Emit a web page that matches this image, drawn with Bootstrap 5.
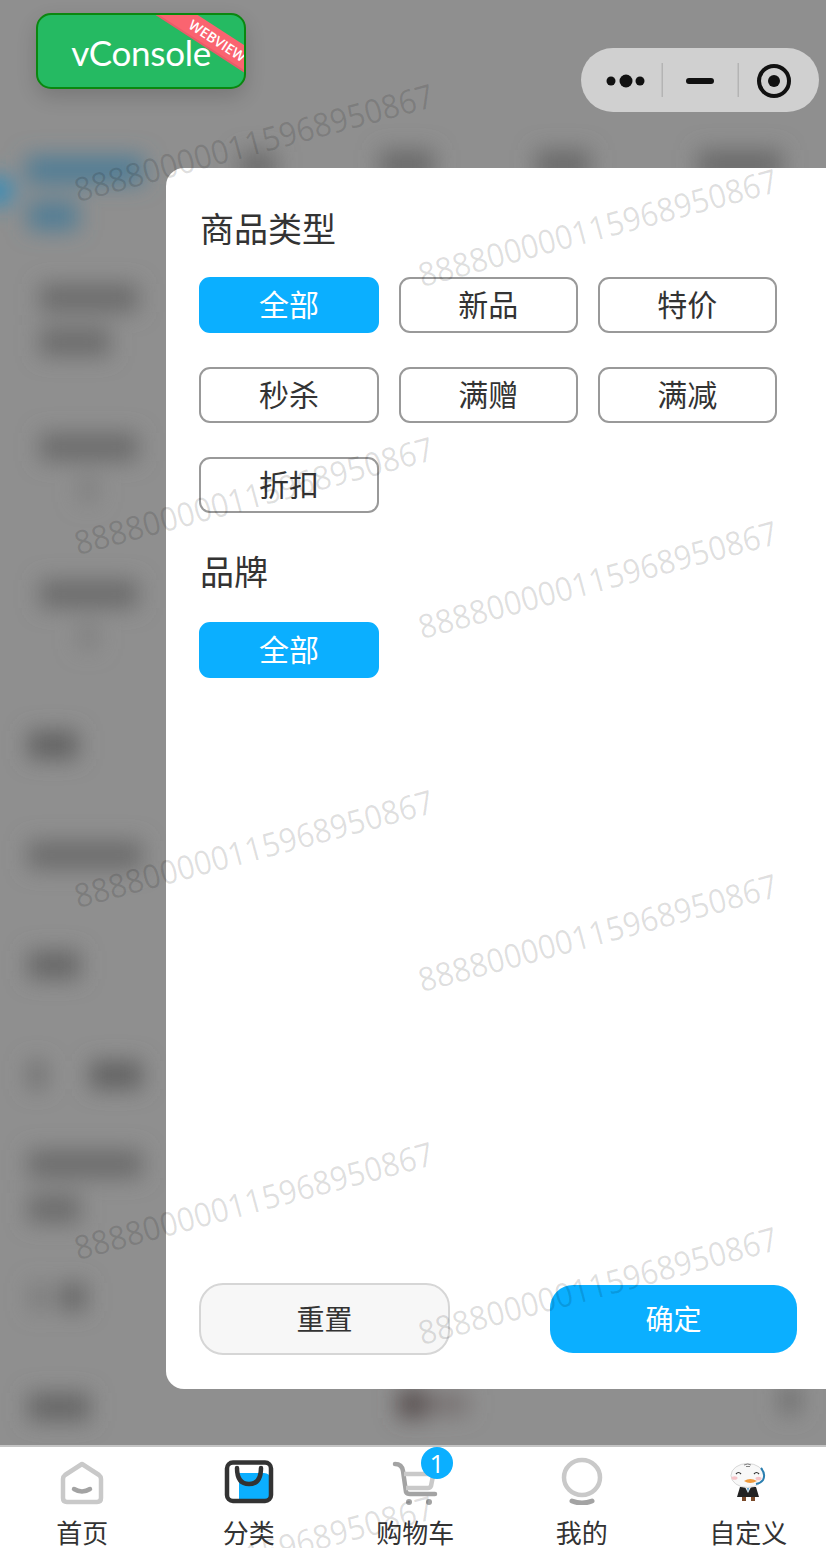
<!DOCTYPE html>
<html lang="zh-CN">
<head>
<meta charset="utf-8">
<title>分类筛选</title>
<link href="https://cdn.jsdelivr.net/npm/bootstrap@5.3.0/dist/css/bootstrap.min.css" rel="stylesheet">
<style>
html,body{margin:0;height:1548px;overflow:hidden;}
body{font-family:"Open Sans","Noto Sans CJK SC",sans-serif;color:#333;background:#fff;}
.screen{position:relative;width:826px;height:1548px;overflow:hidden;}
.backdrop{height:1445px;background:#8f8f8f;display:block;}
.backdrop svg{display:block;}
.drawer{position:absolute;left:166px;top:168px;right:0;height:1221px;background:#fff;border-radius:18px 0 0 18px;padding:34px 0 34px 33px;}
.drawer-title{font-size:34px;line-height:54px;margin:0 0 0 1px;height:54px;font-weight:400;color:#333;}
.chip-grid{display:grid;grid-template-columns:180px 178.5px 179.5px;column-gap:20px;row-gap:34px;}
.types{margin-top:21px;}
.brands{margin-top:23px;}
.chip{height:56px;padding:0;font-size:30px;line-height:52px;border:2px solid #999;border-radius:11px;color:#333;background:#fff;box-shadow:none;}
.chip.on{background:#0bafff;border-color:#0bafff;color:#fff;}
.brand-title{margin-top:32px;}
.drawer-foot{margin-top:auto;padding-right:29px;}
.foot-reset{width:251px;height:72px;padding:0;font-size:28px;background:#f7f7f7;border:2px solid #d6d6d6;border-radius:24px;color:#333;}
.foot-ok{width:247px;height:68px;padding:0;font-size:28px;background:#0bafff;border:0;border-radius:23px;color:#fff;}
.tabbar{height:103px;margin-left:-1px;background:#fff;border-top:2px solid #c4c4c4;display:grid;grid-template-columns:repeat(5,166.5px);}
.tab-item{position:relative;display:flex;flex-direction:column;align-items:center;}
.tab-ico{height:58px;display:flex;align-items:flex-end;justify-content:center;}
.tab-ico svg{display:block;}
.tab-label{font-size:26px;line-height:30px;height:30px;color:#333;white-space:nowrap;margin-top:13px;}
.duck-ico{margin-bottom:4px;}
.cart-count{position:absolute;left:89px;top:0;width:32px;height:32px;border-radius:50%;background:#0bafff;color:#fff;font-size:26px;line-height:32px;text-align:center;font-family:"Open Sans",sans-serif;padding:0;}
.vc-switch{position:absolute;left:36px;top:13px;width:210px;height:76px;background:#25ba62;border:2px solid #0a870f;border-radius:15px;box-shadow:0 8px 20px rgba(0,0,0,.16);color:#fff;font-family:Lato,sans-serif;font-size:35px;letter-spacing:-.3px;line-height:74px;text-align:center;overflow:hidden;z-index:5;padding:0;}
.vc-ribbon{position:absolute;left:97px;top:10px;width:150px;height:21px;background:#fa6470;color:#fff;font-family:"Open Sans",sans-serif;font-size:14px;font-weight:600;letter-spacing:0;line-height:21px;text-align:center;transform:rotate(33deg);box-shadow:0 2px 0 #e95c69;padding-left:18px;}
.capsule{position:absolute;left:581px;top:48px;width:238px;height:64px;border-radius:32px;background:#d0d0d0;z-index:5;}
.capsule svg{display:block;}
.wm-layer{position:absolute;inset:0;pointer-events:none;z-index:4;}
.wm{position:absolute;font-family:"Open Sans",sans-serif;font-size:33px;line-height:40px;white-space:nowrap;color:rgba(0,0,0,.13);transform-origin:0 100%;transform:rotate(-15deg) scaleX(.935);}
.wx1{left:80px;}.wx2{left:423.500px;}
.wy1{top:170px;}.wy2{top:523px;}.wy3{top:876px;}.wy4{top:1228px;}.wy5{top:1582px;}
.wy6{top:255px;}.wy7{top:607px;}.wy8{top:960px;}.wy9{top:1313px;}
</style>
</head>
<body>
<div class="screen">
  <div class="backdrop">
    <svg width="826" height="1445" viewBox="0 0 826 1445" aria-hidden="true">
      <defs><filter id="soft" x="-30%" y="-150%" width="160%" height="400%"><feGaussianBlur stdDeviation="11"/></filter></defs>
      <g filter="url(#soft)">
        <rect x="26" y="156" width="118" height="28" fill="#4f7d95"/>
        <rect x="28" y="202" width="50" height="28" fill="#4f7d95"/>
        <circle cx="-2" cy="191" r="15" fill="#2f8cbc"/>
        <rect x="240" y="152" width="36" height="28" fill="#6a6a6a"/>
        <rect x="380" y="150" width="54" height="30" fill="#6a6a6a"/>
        <rect x="536" y="150" width="54" height="30" fill="#6a6a6a"/>
        <rect x="698" y="150" width="84" height="30" fill="#6a6a6a"/>
        <rect x="40" y="284" width="98" height="28" fill="#6c6c6c"/>
        <rect x="40" y="328" width="70" height="28" fill="#6c6c6c"/>
        <rect x="40" y="433" width="98" height="28" fill="#6c6c6c"/>
        <rect x="78" y="476" width="20" height="26" fill="#808080"/>
        <rect x="40" y="580" width="98" height="28" fill="#6c6c6c"/>
        <rect x="78" y="623" width="20" height="26" fill="#808080"/>
        <rect x="28" y="731" width="50" height="28" fill="#626262"/>
        <rect x="28" y="841" width="114" height="28" fill="#6c6c6c"/>
        <rect x="28" y="951" width="52" height="28" fill="#666"/>
        <rect x="28" y="1061" width="18" height="28" fill="#707070"/>
        <rect x="90" y="1061" width="52" height="28" fill="#626262"/>
        <rect x="28" y="1150" width="114" height="28" fill="#6c6c6c"/>
        <rect x="28" y="1195" width="52" height="28" fill="#6c6c6c"/>
        <rect x="60" y="1283" width="26" height="28" fill="#666"/>
        <rect x="30" y="1283" width="18" height="28" fill="#7a7a7a"/>
        <rect x="28" y="1393" width="62" height="28" fill="#666"/>
        <rect x="398" y="1390" width="28" height="28" fill="#564e4e"/>
        <rect x="426" y="1394" width="42" height="20" fill="#767070"/>
        <rect x="780" y="1386" width="20" height="28" fill="#6e6e6e"/>
      </g>
    </svg>
  </div>

  <section class="drawer d-flex flex-column">
    <h2 class="drawer-title">商品类型</h2>
    <div class="chip-grid types">
      <button type="button" class="btn chip on">全部</button>
      <button type="button" class="btn chip">新品</button>
      <button type="button" class="btn chip">特价</button>
      <button type="button" class="btn chip">秒杀</button>
      <button type="button" class="btn chip">满赠</button>
      <button type="button" class="btn chip">满减</button>
      <button type="button" class="btn chip">折扣</button>
    </div>
    <h2 class="drawer-title brand-title">品牌</h2>
    <div class="chip-grid brands">
      <button type="button" class="btn chip on">全部</button>
    </div>
    <div class="drawer-foot d-flex justify-content-between align-items-center">
      <button type="button" class="btn foot-reset">重置</button>
      <button type="button" class="btn foot-ok">确定</button>
    </div>
  </section>

  <nav class="tabbar">
    <div class="tab-item">
      <div class="tab-ico">
        <svg width="44" height="44" viewBox="0 0 44 44" aria-hidden="true">
          <path d="M22 3 L39 14 Q41 15.500 41 18 V37 Q41 41 37 41 H7 Q3 41 3 37 V18 Q3 15.500 5 14 Z" fill="none" stroke="#c9c9c9" stroke-width="4.500" stroke-linejoin="round"/>
          <path d="M14 28 Q22 33 30 28" fill="none" stroke="#a3a3a3" stroke-width="4.500" stroke-linecap="round"/>
        </svg>
      </div>
      <span class="tab-label">首页</span>
    </div>
    <div class="tab-item">
      <div class="tab-ico">
        <svg width="50" height="45" viewBox="0 0 50 45" aria-hidden="true">
          <path d="M15 13 H40 Q46 13 46 19 V40 H15 Z" fill="#0bafff"/>
          <rect x="3" y="2.500" width="44" height="38.500" rx="6" fill="none" stroke="#333" stroke-width="4.500"/>
          <path d="M13 8 Q13 24 25 24 Q37 24 37 8" fill="none" stroke="#333" stroke-width="4.500" stroke-linecap="round"/>
        </svg>
      </div>
      <span class="tab-label">分类</span>
    </div>
    <div class="tab-item">
      <div class="tab-ico">
        <svg width="46" height="44" viewBox="0 0 46 44" aria-hidden="true">
          <path d="M3 3 Q10 3 11 10 L14 31 Q15 33 18 33 H43" fill="none" stroke="#a3a3a3" stroke-width="4.500" stroke-linecap="round" stroke-linejoin="round"/>
          <path d="M12 13 H39 Q41 13 41 15 L39 25 Q38 27 36 27 H14" fill="none" stroke="#c9c9c9" stroke-width="4.500" stroke-linejoin="round"/>
          <circle cx="17" cy="41" r="3" fill="#a3a3a3"/>
          <circle cx="37" cy="41" r="3" fill="#a3a3a3"/>
        </svg>
      </div>
      <span class="tab-label">购物车</span>
      <span class="cart-count">1</span>
    </div>
    <div class="tab-item">
      <div class="tab-ico">
        <svg width="44" height="50" viewBox="0 0 44 50" aria-hidden="true">
          <ellipse cx="22" cy="22.500" rx="18" ry="17.500" fill="none" stroke="#c9c9c9" stroke-width="4.500"/>
          <path d="M12 46 Q22 50 32 46" fill="none" stroke="#a3a3a3" stroke-width="5" stroke-linecap="round"/>
        </svg>
      </div>
      <span class="tab-label">我的</span>
    </div>
    <div class="tab-item">
      <div class="tab-ico">
        <svg class="duck-ico" width="36" height="38" viewBox="0 0 36 38" aria-hidden="true">
          <path d="M10 24 H26 L29 34 H7 Z" fill="#222"/>
          <path d="M15 24 L18 30 L21 24 Z" fill="#f2f2f2"/>
          <path d="M17 25 H19 L18 29 Z" fill="#4f9fd0"/>
          <rect x="12" y="34" width="4" height="4" fill="#7a4a2a"/>
          <rect x="21" y="34" width="4" height="4" fill="#7a4a2a"/>
          <ellipse cx="17.500" cy="12.500" rx="16.500" ry="12" fill="#f8f8f8" stroke="#d8d8d8" stroke-width="1"/>
          <path d="M31 5 Q36 11 33 17 Q31 20 26 21" fill="none" stroke="#2b7fb0" stroke-width="2"/>
          <path d="M6 11 Q8.500 8 11 11 M24 11 Q26.500 8 29 11" fill="none" stroke="#333" stroke-width="1.200"/>
          <ellipse cx="4.500" cy="15" rx="3" ry="1.800" fill="#f7c3c8"/>
          <ellipse cx="28.500" cy="15.500" rx="3" ry="1.800" fill="#f7c3c8"/>
          <path d="M14 18 Q20 14 27 18 Q20 22 14 18 Z" fill="#ef9a3c"/>
          <path d="M14 2 Q18 0 21 2 M16 3.500 H20" fill="none" stroke="#666" stroke-width=".8"/>
        </svg>
      </div>
      <span class="tab-label">自定义</span>
    </div>
  </nav>

  <div class="wm-layer" aria-hidden="true">
    <span class="wm wx1 wy1">888800000115968950867</span>
    <span class="wm wx1 wy2">888800000115968950867</span>
    <span class="wm wx1 wy3">888800000115968950867</span>
    <span class="wm wx1 wy4">888800000115968950867</span>
    <span class="wm wx1 wy5">888800000115968950867</span>
    <span class="wm wx2 wy6">888800000115968950867</span>
    <span class="wm wx2 wy7">888800000115968950867</span>
    <span class="wm wx2 wy8">888800000115968950867</span>
    <span class="wm wx2 wy9">888800000115968950867</span>
  </div>

  <div class="vc-switch">vConsole<span class="vc-ribbon">WEBVIEW</span></div>

  <div class="capsule">
    <svg width="238" height="64" viewBox="0 0 238 64" aria-hidden="true">
      <circle cx="30" cy="33" r="4.500" fill="#111"/>
      <circle cx="45" cy="33" r="6.500" fill="#111"/>
      <circle cx="59" cy="33" r="4.500" fill="#111"/>
      <rect x="80.500" y="15" width="1.500" height="34" fill="#b4b4b4"/>
      <rect x="105" y="30" width="28" height="6" rx="3" fill="#111"/>
      <rect x="156.500" y="15" width="1.500" height="34" fill="#b4b4b4"/>
      <circle cx="193" cy="33" r="15" fill="none" stroke="#111" stroke-width="4"/>
      <circle cx="193" cy="33" r="6" fill="#111"/>
    </svg>
  </div>
</div>
<script src="https://cdn.jsdelivr.net/npm/bootstrap@5.3.0/dist/js/bootstrap.bundle.min.js"></script>
</body>
</html>
